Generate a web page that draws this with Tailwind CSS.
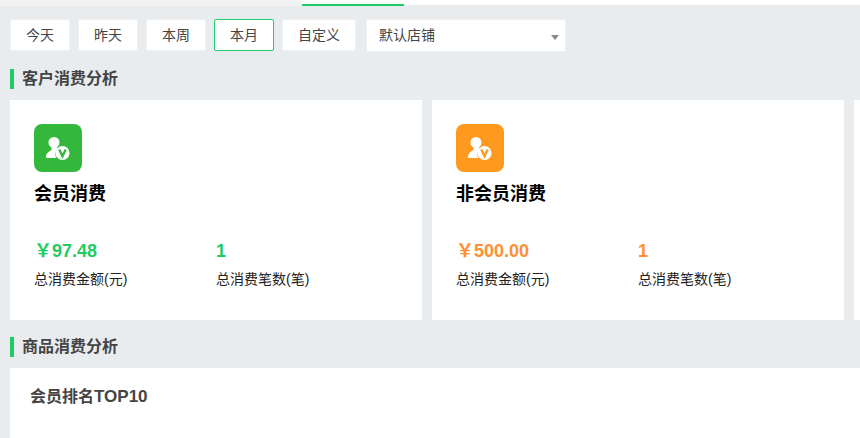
<!DOCTYPE html>
<html lang="zh-CN">
<head>
    <meta charset="UTF-8">
    <title>消费分析</title>
    <script src="https://cdn.jsdelivr.net/npm/@tailwindcss/browser@4"></script>
</head>
<body class="bg-[#e9ecef] h-[438px] w-[860px] overflow-hidden font-['Liberation_Sans','Noto_Sans_CJK_SC',sans-serif]">

    <!-- top tabs -->
    <div class="flex h-[6px]">
        <div class="w-[302px] bg-[#f2f2f2]"></div>
        <div class="w-[102px] bg-white border-b-2 border-[#1fcb65]"></div>
        <div class="flex-1 h-[5px] bg-white"></div>
    </div>

    <!-- filters -->
    <div class="flex pl-[10px] pt-[13px] text-[14px] text-[#444]">
        <button class="w-[60px] h-[32px] bg-white rounded-[2px] border border-[#f0f1f3] mr-[8px]">今天</button>
        <button class="w-[60px] h-[32px] bg-white rounded-[2px] border border-[#f0f1f3] mr-[8px]">昨天</button>
        <button class="w-[60px] h-[32px] bg-white rounded-[2px] border border-[#f0f1f3] mr-[8px]">本周</button>
        <button class="w-[60px] h-[32px] bg-white rounded-[2px] border border-[#1fcb65] mr-[8px]">本月</button>
        <button class="w-[74px] h-[32px] bg-white rounded-[2px] border border-[#f0f1f3] mr-[10px]">自定义</button>
        <div class="w-[200px] h-[33px] bg-white rounded-[2px] border border-[#f0f1f3] flex items-center justify-between pl-[12px] pr-[6px]">
            <span>默认店铺</span>
            <span class="w-0 h-0 border-x-[4px] border-x-transparent border-t-[5px] border-t-[#888] mt-[3px]"></span>
        </div>
    </div>

    <!-- customer section -->
    <div class="flex items-center h-[20px] mt-[17px] ml-[10px] border-l-4 border-[#1fcb65] pl-[8px]">
        <h2 class="text-[16px] font-bold text-[#444]">客户消费分析</h2>
    </div>

    <div class="flex gap-[10px] pl-[10px] mt-[11px] h-[220px]">
        <div class="w-[412px] shrink-0 bg-white pl-[24px] pt-[24px]">
            <div class="w-[48px] h-[48px] rounded-[8px] bg-[#33b83b] flex items-center justify-center">
                <svg width="26" height="26" viewBox="0 0 26 26">
                    <circle cx="9" cy="7.500" r="5.500" fill="#fff"/>
                    <path d="M6.500 11h5l1 3a7 7 0 0 0-1 9H2.500c-1.500 0-2-1-1.500-2.300C2 17.500 5 16 6.500 15z" fill="#fff"/>
                    <circle cx="17.500" cy="18" r="7" fill="#fff"/>
                    <path d="M14.300 14.500l3.200 6.700 3.200-6.700" fill="none" stroke="#33b83b" stroke-width="2.400"/>
                </svg>
            </div>
            <h3 class="text-[18px] font-bold text-black leading-[24px] mt-[10px]">会员消费</h3>
            <div class="flex mt-[33px]">
                <div class="w-[182px]">
                    <p class="text-[18px] font-bold text-[#1fcb65] leading-[24px]">￥97.48</p>
                    <p class="text-[14px] text-[#222] leading-[20px] mt-[6px]">总消费金额(元)</p>
                </div>
                <div>
                    <p class="text-[18px] font-bold text-[#1fcb65] leading-[24px]">1</p>
                    <p class="text-[14px] text-[#222] leading-[20px] mt-[6px]">总消费笔数(笔)</p>
                </div>
            </div>
        </div>

        <div class="w-[412px] shrink-0 bg-white pl-[24px] pt-[24px]">
            <div class="w-[48px] h-[48px] rounded-[8px] bg-[#ff9a1f] flex items-center justify-center">
                <svg width="26" height="26" viewBox="0 0 26 26">
                    <circle cx="9" cy="7.500" r="5.500" fill="#fff"/>
                    <path d="M6.500 11h5l1 3a7 7 0 0 0-1 9H2.500c-1.500 0-2-1-1.500-2.300C2 17.500 5 16 6.500 15z" fill="#fff"/>
                    <circle cx="17.500" cy="18" r="7" fill="#fff"/>
                    <path d="M14.300 14.500l3.200 6.700 3.200-6.700" fill="none" stroke="#ff9a1f" stroke-width="2.400"/>
                </svg>
            </div>
            <h3 class="text-[18px] font-bold text-black leading-[24px] mt-[10px]">非会员消费</h3>
            <div class="flex mt-[33px]">
                <div class="w-[182px]">
                    <p class="text-[18px] font-bold text-[#ff8f33] leading-[24px]">￥500.00</p>
                    <p class="text-[14px] text-[#222] leading-[20px] mt-[6px]">总消费金额(元)</p>
                </div>
                <div>
                    <p class="text-[18px] font-bold text-[#ff8f33] leading-[24px]">1</p>
                    <p class="text-[14px] text-[#222] leading-[20px] mt-[6px]">总消费笔数(笔)</p>
                </div>
            </div>
        </div>

        <div class="flex-1 bg-white"></div>
    </div>

    <!-- goods section -->
    <div class="flex items-center h-[20px] mt-[17px] ml-[10px] border-l-4 border-[#1fcb65] pl-[8px]">
        <h2 class="text-[16px] font-bold text-[#444]">商品消费分析</h2>
    </div>

    <div class="bg-white ml-[10px] mt-[11px] h-[70px] pl-[20px] pt-[18px]">
        <h3 class="text-[16px] font-bold text-[#444] leading-[22px]">会员排名<span class="text-[17px]">TOP10</span></h3>
    </div>

</body>
</html>
